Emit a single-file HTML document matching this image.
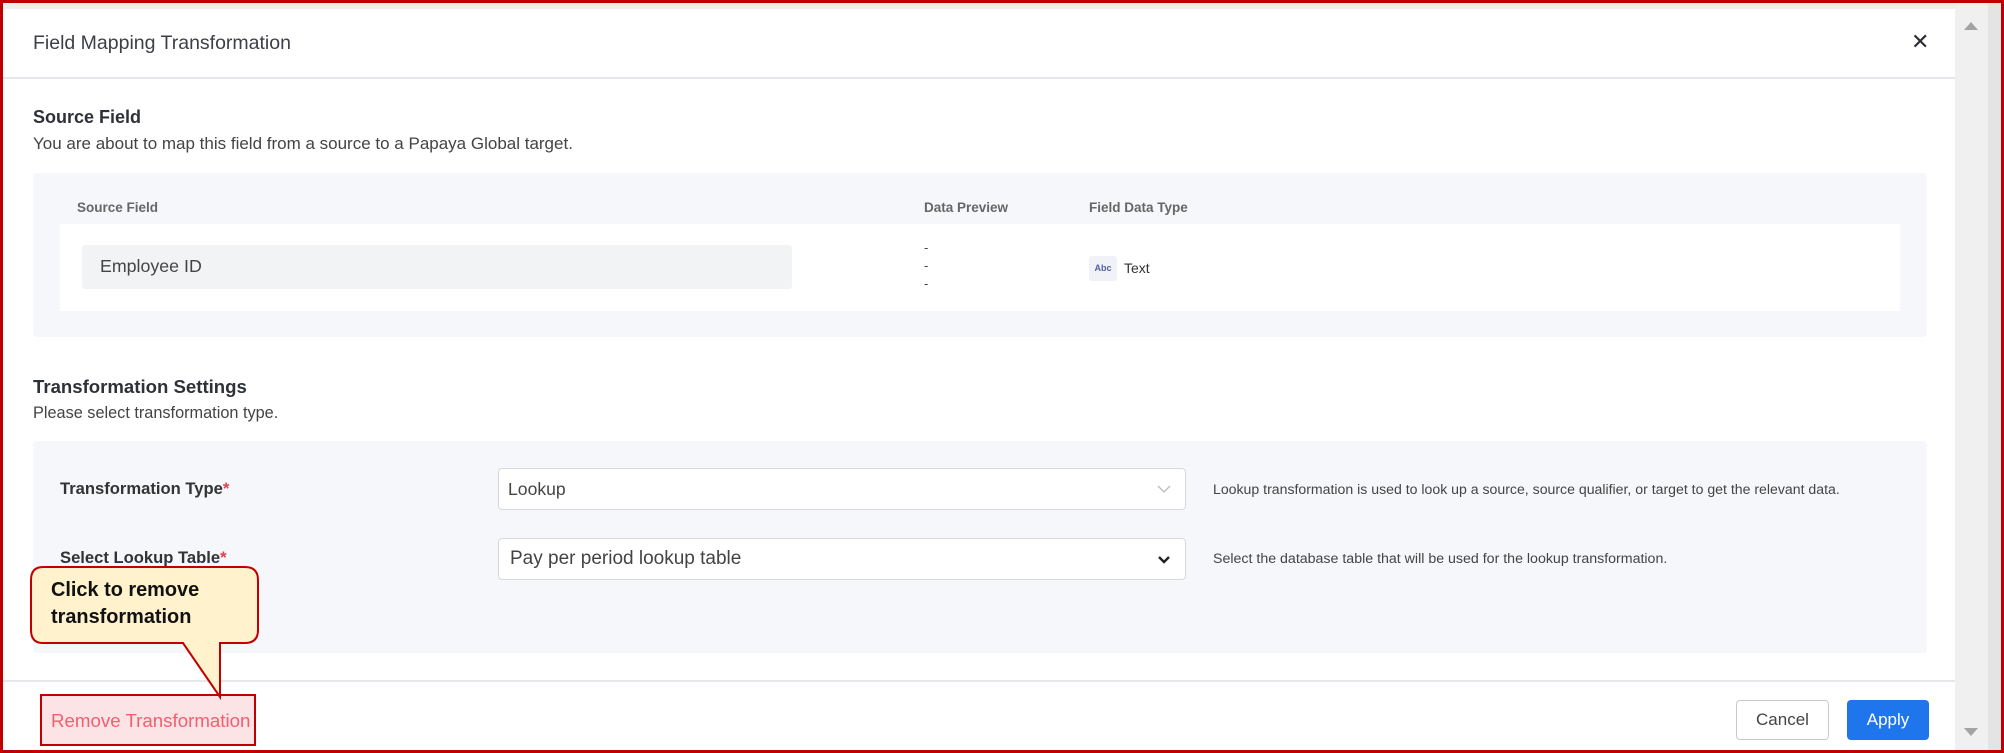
<!DOCTYPE html>
<html><head><meta charset="utf-8"><style>
*{margin:0;padding:0;box-sizing:border-box}
body{width:2004px;height:753px;overflow:hidden;background:#fff;font-family:"Liberation Sans",sans-serif;position:relative;color:#333}
.a{position:absolute;white-space:nowrap}
</style></head><body>
<div class="a" style="left:0;top:0;width:2004px;height:753px;border:3px solid #c00000;"></div>
<div class="a" style="left:3px;top:3px;width:1952px;height:6px;background:#eee"></div>
<!-- scrollbar -->
<div class="a" style="left:1955px;top:3px;width:33px;height:747px;background:#f0f0f0"></div>
<div class="a" style="left:1988px;top:3px;width:13px;height:747px;background:#e4e4e4"></div>
<div class="a" style="left:1964px;top:22px;width:0;height:0;border-left:7px solid transparent;border-right:7px solid transparent;border-bottom:8px solid #a3a3a3"></div>
<div class="a" style="left:1964px;top:728px;width:0;height:0;border-left:7px solid transparent;border-right:7px solid transparent;border-top:8px solid #a3a3a3"></div>

<div class="a" style="left:33px;top:32px;font-size:19.5px;color:#3c3f45">Field Mapping Transformation</div>
<div class="a" style="left:1911px;top:29px;font-size:22px;color:#2a2d33">✕</div>
<div class="a" style="left:3px;top:77px;width:1952px;height:2px;background:#e6e7ea"></div>

<div class="a" style="left:33px;top:107px;font-size:18px;font-weight:bold;color:#2e3138">Source Field</div>
<div class="a" style="left:33px;top:134px;font-size:17px;color:#444">You are about to map this field from a source to a Papaya Global target.</div>
<div class="a" style="left:33px;top:173px;width:1894px;height:164px;background:#f6f7fa;border-radius:4px"></div>
<div class="a" style="left:77px;top:200px;font-size:13.5px;font-weight:bold;color:#666">Source Field</div>
<div class="a" style="left:924px;top:200px;font-size:13.5px;font-weight:bold;color:#666">Data Preview</div>
<div class="a" style="left:1089px;top:200px;font-size:13.5px;font-weight:bold;color:#666">Field Data Type</div>
<div class="a" style="left:60px;top:224px;width:1840px;height:87px;background:#fff"></div>
<div class="a" style="left:82px;top:245px;width:710px;height:44px;background:#f2f3f5;border-radius:3px"></div>
<div class="a" style="left:100px;top:256px;font-size:17.8px;color:#444">Employee ID</div>
<div class="a" style="left:924px;top:239px;font-size:13px;line-height:18px;color:#444;white-space:pre">-
-
-</div>
<div class="a" style="left:1089px;top:256px;width:28px;height:25px;background:#f1f2f8;border-radius:3px;font-size:9px;color:#5560a8;text-align:center;line-height:25px;font-weight:bold">Abc</div>
<div class="a" style="left:1124px;top:260px;font-size:14px;color:#333">Text</div>

<div class="a" style="left:33px;top:376px;font-size:18.6px;font-weight:bold;color:#2e3138">Transformation Settings</div>
<div class="a" style="left:33px;top:404px;font-size:16.3px;color:#444">Please select transformation type.</div>
<div class="a" style="left:33px;top:441px;width:1894px;height:212px;background:#f6f7fa;border-radius:4px"></div>
<div class="a" style="left:60px;top:479px;font-size:16.6px;font-weight:bold;color:#333">Transformation Type<span style="color:#e04050">*</span></div>
<div class="a" style="left:498px;top:468px;width:688px;height:42px;background:#fff;border:1px solid #d8d9dc;border-radius:4px"></div>
<div class="a" style="left:508px;top:479px;font-size:17.6px;color:#444">Lookup</div>
<svg class="a" style="left:1157px;top:484px" width="14" height="10"><path d="M1 2 L7 8 L13 2" fill="none" stroke="#bbb" stroke-width="1.3"/></svg>
<div class="a" style="left:1213px;top:481px;font-size:14.1px;color:#444">Lookup transformation is used to look up a source, source qualifier, or target to get the relevant data.</div>
<div class="a" style="left:60px;top:548px;font-size:16.6px;font-weight:bold;color:#333">Select Lookup Table<span style="color:#e04050">*</span></div>
<div class="a" style="left:498px;top:538px;width:688px;height:42px;background:#fff;border:1px solid #d8d9dc;border-radius:4px"></div>
<div class="a" style="left:510px;top:548px;font-size:19px;color:#444">Pay per period lookup table</div>
<svg class="a" style="left:1157px;top:555px" width="14" height="10"><path d="M2 2 L7 7 L12 2" fill="none" stroke="#222" stroke-width="2.4"/></svg>
<div class="a" style="left:1213px;top:551px;font-size:14.2px;color:#444">Select the database table that will be used for the lookup transformation.</div>

<div class="a" style="left:3px;top:680px;width:1952px;height:2px;background:#e6e7ea"></div>
<div class="a" style="left:1736px;top:700px;width:93px;height:40px;border:1px solid #c8c9cc;border-radius:4px;font-size:17px;color:#444;text-align:center;line-height:38px">Cancel</div>
<div class="a" style="left:1847px;top:700px;width:82px;height:40px;background:#1f75ec;border-radius:4px;font-size:17px;color:#fff;text-align:center;line-height:40px">Apply</div>

<div class="a" style="left:40px;top:694px;width:216px;height:52px;background:#fbe3e6;border:2px solid #c00000"></div>
<div class="a" style="left:51px;top:710px;font-size:18.7px;color:#f0606e">Remove Transformation</div>

<svg class="a" style="left:28px;top:564px" width="234" height="136">
<path d="M15 3 H217 Q230 3 230 16 V66 Q230 79 217 79 H192 L192 133 L155 79 H15 Q3 79 3 66 V16 Q3 3 15 3 Z" fill="#fff2cc" stroke="#c00000" stroke-width="2"/>
</svg>
<div class="a" style="left:51px;top:577px;font-size:19.9px;font-weight:bold;color:#111;line-height:27px;white-space:pre">Click to remove
transformation</div>
</body></html>
